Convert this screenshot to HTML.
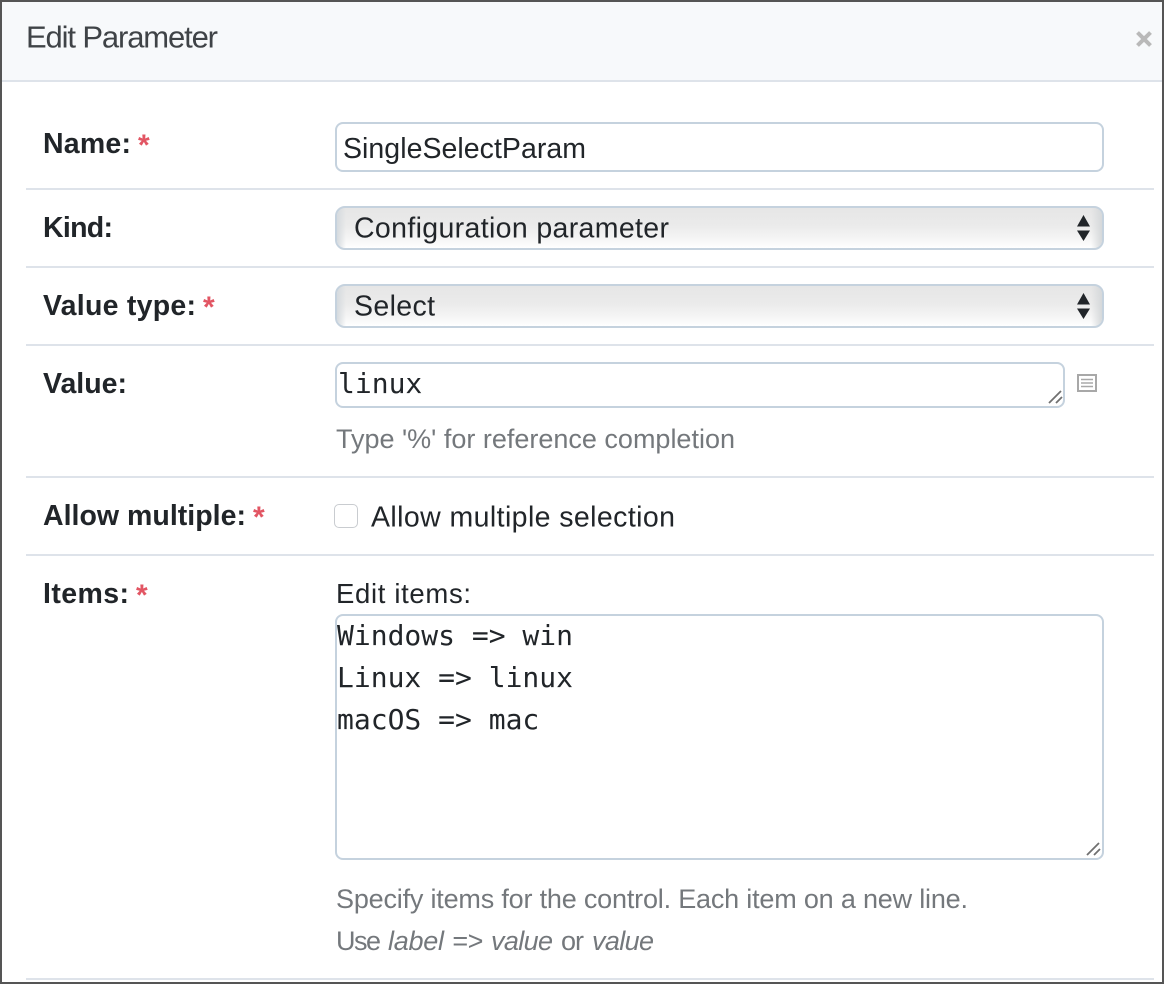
<!DOCTYPE html>
<html><head><meta charset="utf-8"><style>
html,body{margin:0;padding:0;background:#fff}
#p{position:relative;width:1164px;height:984px;overflow:hidden;background:#fff}
.a{position:absolute;box-sizing:border-box}
.hr{position:absolute;left:26px;width:1128px;height:2px;background:#dee3ea}
.inp{position:absolute;box-sizing:border-box;border:2px solid #c5d2de;border-radius:8px;background:#fff}
.sel{position:absolute;box-sizing:border-box;left:335px;width:769px;height:44px;border:2px solid #c5d2de;border-radius:10px;background:linear-gradient(#e6e6e6 0,#ebebeb 45%,#f6f6f6 80%,#fff 100%)}
.sel:before{content:"";position:absolute;left:0;top:0;bottom:0;width:9px;border-radius:8px 0 0 8px;background:linear-gradient(90deg,#d5dade,rgba(235,235,235,0))}
.sel:after{content:"";position:absolute;right:0;top:0;bottom:0;width:11px;border-radius:0 8px 8px 0;background:linear-gradient(270deg,#d5d8da,rgba(235,235,235,0))}
svg{position:absolute;left:0;top:0}
text{font-family:"Liberation Sans",sans-serif;font-size:28.500px;fill:#212529}
.b{font-weight:bold;font-size:28.500px}
.m{font-family:"DejaVu Sans Mono","Liberation Mono",monospace;font-size:28px}
.g{fill:#74787c;font-size:27px}
.i{font-style:italic}
.r{fill:#e25563;font-weight:bold;font-size:30px}
</style></head><body><div id="p">
<div class="a" style="left:2px;top:2px;width:1160px;height:79px;background:#f7f9fb"></div>
<div class="a" style="left:2px;top:80px;width:1160px;height:2px;background:#dee3ea"></div>
<div class="hr" style="top:188px"></div>
<div class="hr" style="top:266px"></div>
<div class="hr" style="top:344px"></div>
<div class="hr" style="top:476px"></div>
<div class="hr" style="top:554px"></div>
<div class="hr" style="top:978px"></div>
<div class="inp" style="left:335px;top:122px;width:769px;height:50px"></div>
<div class="sel" style="top:206px"></div>
<div class="sel" style="top:284px"></div>
<div class="inp" style="left:335px;top:362px;width:730px;height:46px"></div>
<div class="a" style="left:334px;top:504px;width:24px;height:24px;border:1.5px solid #c9ccd0;border-radius:5px;background:#fff"></div>
<div class="inp" style="left:335px;top:614px;width:769px;height:246px"></div>
<svg width="1164" height="984" viewBox="0 0 1164 984">
<text x="26" y="47.500" textLength="192" style="font-size:31px;fill:#3f4347">Edit Parameter</text>
<path d="M1137.500 32.500L1150.500 45.500M1150.500 32.500L1137.500 45.500" stroke="#b9b9b9" stroke-width="4" fill="none"/>
<text class="b" x="43" y="153" textLength="88">Name:</text>
<text class="r" x="138" y="155">*</text>
<text x="343" y="158" textLength="243">SingleSelectParam</text>
<text class="b" x="43" y="237" textLength="70">Kind:</text>
<text x="354" y="237.500" textLength="315">Configuration parameter</text>
<path d="M1077 226.500L1083.500 215L1090 226.500ZM1077 230.500L1083.500 241L1090 230.500Z" fill="#212529"/>
<text class="b" x="43" y="315" textLength="153">Value type:</text>
<text class="r" x="203" y="317">*</text>
<text x="354" y="315.500" textLength="81">Select</text>
<path d="M1077 304.500L1083.500 293L1090 304.500ZM1077 308.500L1083.500 319L1090 308.500Z" fill="#212529"/>
<text class="b" x="43" y="393" textLength="84">Value:</text>
<text class="m" x="338" y="393">linux</text>
<path d="M1049 403L1061 391M1056 403L1062 397" stroke="#707070" stroke-width="1.800" fill="none"/>
<rect x="1078" y="375" width="18" height="16" fill="none" stroke="#a8a8a8" stroke-width="2"/>
<path d="M1081 379.500H1093M1081 383H1093M1081 386.500H1093" stroke="#a8a8a8" stroke-width="1.600" fill="none"/>
<text class="g" x="336" y="448" textLength="399">Type '%' for reference completion</text>
<text class="b" x="43" y="525" textLength="203">Allow multiple:</text>
<text class="r" x="253" y="527">*</text>
<text x="371" y="526.500" textLength="304">Allow multiple selection</text>
<text class="b" x="43" y="603" textLength="86">Items:</text>
<text class="r" x="136" y="605">*</text>
<text x="336" y="603" textLength="135" style="font-size:27.500px">Edit items:</text>
<text class="m" x="337" y="645">Windows =&gt; win</text>
<text class="m" x="337" y="687">Linux =&gt; linux</text>
<text class="m" x="337" y="729">macOS =&gt; mac</text>
<path d="M1087 855L1099 843M1094 855L1100 849" stroke="#707070" stroke-width="1.800" fill="none"/>
<text class="g" x="336" y="908" textLength="632">Specify items for the control. Each item on a new line.</text>
<text class="g" x="336" y="950" textLength="45">Use</text>
<text class="g i" x="388" y="950" textLength="56">label</text>
<text class="g i" x="452" y="950" textLength="31">=&gt;</text>
<text class="g i" x="491" y="950" textLength="62">value</text>
<text class="g" x="561" y="950" textLength="23">or</text>
<text class="g i" x="592" y="950" textLength="62">value</text>
</svg>
<div class="a" style="left:0;top:0;width:1164px;height:984px;border:2px solid #555"></div>
</div></body></html>
